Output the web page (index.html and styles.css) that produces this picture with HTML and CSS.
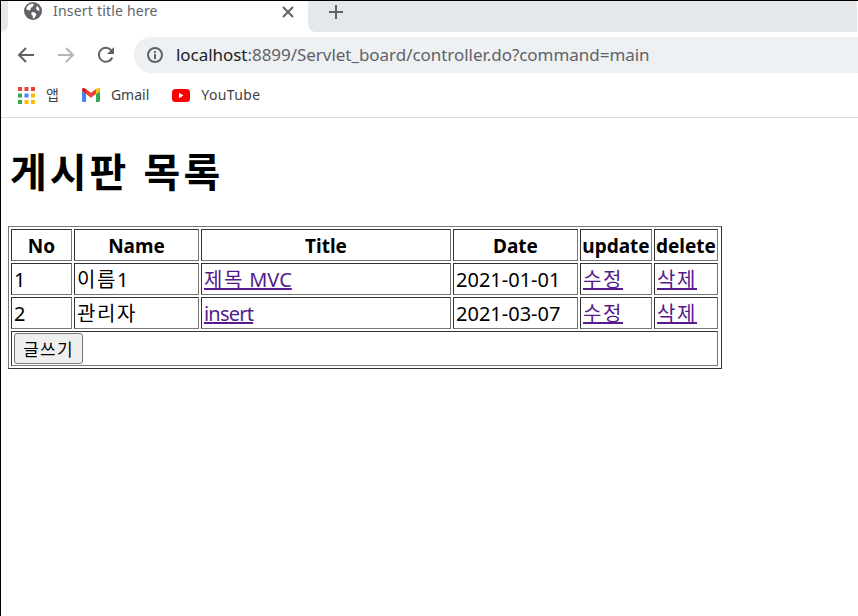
FILE: index.html
```html
<!DOCTYPE html>
<html lang="ko">
<head>
<meta charset="utf-8">
<title>Insert title here</title>
<link rel="stylesheet" href="styles.css">
</head>
<body>
<div class="window">
  <div class="tabstrip">
    <div class="tab-edge"></div>
    <div class="tab">
      <svg class="globe" width="18" height="18" viewBox="0 0 18 18"><circle cx="9" cy="9" r="9" fill="#5f6368"/><path d="M4 3.500c2-1.500 4-2 6-1.500L8.500 5 6.500 6 7 7.500 5 8.500 2 7c.3-1.300 1-2.500 2-3.500zM8 10l3 .5 1.500 2-2 3.500-1.500.5-.5-3-1.500-1.500zM13 3.500l2 2.500.5 3-2-.5-1.500-2z" fill="#fff"/></svg>
      <span class="tab-title">Insert title here</span>
      <svg class="tab-close" width="12" height="12" viewBox="0 0 12 12"><path d="M1 1l10 10M11 1L1 11" stroke="#5f6368" stroke-width="2"/></svg>
    </div>
    <div class="tab-rest">
      <svg width="16" height="16" viewBox="0 0 16 16"><path d="M8 1v14M1 8h14" stroke="#5f6368" stroke-width="2"/></svg>
    </div>
  </div>
  <div class="toolbar">
    <svg class="nav-icon" width="18" height="18" viewBox="0 0 18 18"><path d="M17 9H2M9 2L2 9l7 7" fill="none" stroke="#5f6368" stroke-width="2"/></svg>
    <svg class="nav-icon" width="18" height="18" viewBox="0 0 18 18"><path d="M1 9h15M9 2l7 7-7 7" fill="none" stroke="#b4b7ba" stroke-width="2"/></svg>
    <svg class="nav-icon" width="18" height="18" viewBox="0 0 18 18"><path d="M15.300 11.500A7 7 0 1 1 14 4l1.500 1.500" fill="none" stroke="#5f6368" stroke-width="2"/><path d="M17 1v7h-7z" fill="#5f6368"/></svg>
    <div class="omnibox">
      <svg class="info" width="16" height="16" viewBox="0 0 16 16"><circle cx="8" cy="8" r="7" fill="none" stroke="#5f6368" stroke-width="2"/><path d="M8 7v5M8 4v2" stroke="#5f6368" stroke-width="2"/></svg>
      <span class="url"><span class="host">localhost</span>:8899/Servlet_board/controller.do?command=main</span>
    </div>
  </div>
  <div class="bookmarks">
    <span class="bookmark">
      <svg class="bm-apps" width="17" height="17" viewBox="0 0 17 17">
        <rect width="4" height="4" fill="#ea4335"/><rect x="6.500" width="4" height="4" fill="#ea4335"/><rect x="13" width="4" height="4" fill="#ea4335"/>
        <rect y="6.500" width="4" height="4" fill="#34a853"/><rect x="6.500" y="6.500" width="4" height="4" fill="#4285f4"/><rect x="13" y="6.500" width="4" height="4" fill="#fbbc05"/>
        <rect y="13" width="4" height="4" fill="#34a853"/><rect x="6.500" y="13" width="4" height="4" fill="#fbbc05"/><rect x="13" y="13" width="4" height="4" fill="#fbbc05"/>
      </svg>
      <span class="bm-label">앱</span>
    </span>
    <span class="bookmark">
      <svg width="18" height="14" viewBox="0 0 18 14"><path d="M0 3v9.500C0 13.300.7 14 1.500 14H4V6z" fill="#4285f4"/><path d="M18 3v9.500c0 .8-.7 1.500-1.500 1.500H14V6z" fill="#34a853"/><path d="M14 1v5l4-3V1.500C18 0 16.500-.4 15.500.3z" fill="#fbbc05"/><path d="M4 6V1l5 3.800L14 1v5L9 9.800z" fill="#ea4335"/><path d="M0 3V1.500C0 0 1.500-.4 2.500.3L4 1v5z" fill="#c5221f"/></svg>
      <span class="bm-label">Gmail</span>
    </span>
    <span class="bookmark">
      <svg width="18" height="13" viewBox="0 0 18 13"><rect width="18" height="13" rx="3.500" fill="#f00"/><path d="M7 3.800v5.400L11.500 6.500z" fill="#fff"/></svg>
      <span class="bm-label bm-wide">YouTube</span>
    </span>
  </div>
  <main class="page">
    <h1 class="heading">게시판 목록</h1>
    <table class="board">
      <colgroup>
        <col class="c-no"><col class="c-name"><col class="c-title"><col class="c-date"><col class="c-update"><col class="c-delete">
      </colgroup>
      <tr><th>No</th><th>Name</th><th>Title</th><th>Date</th><th>update</th><th>delete</th></tr>
      <tr><td>1</td><td><span class="ko">이름</span>1</td><td><a href="#a"><span class="ko">제목</span> MVC</a></td><td>2021-01-01</td><td><a href="#a"><span class="ko">수정</span></a></td><td><a href="#a"><span class="ko">삭제</span></a></td></tr>
      <tr><td>2</td><td><span class="ko">관리자</span></td><td><a href="#a" class="tight">insert</a></td><td>2021-03-07</td><td><a href="#a"><span class="ko">수정</span></a></td><td><a href="#a"><span class="ko">삭제</span></a></td></tr>
      <tr><td colspan="6" class="action"><button class="write" type="button">글쓰기</button></td></tr>
    </table>
  </main>
</div>
</body>
</html>
```
FILE: styles.css
```css
* { box-sizing: border-box; }
html, body { margin: 0; padding: 0; background: #fff; }
body { font-family: "Noto Sans", "Noto Sans CJK KR", sans-serif; }
a:link, a { color: #551a8b; }

.window {
  width: 858px;
  height: 616px;
  border-left: 1px solid #000;
  border-top: 1px solid #000;
  overflow: hidden;
  background: #fff;
}

.tabstrip { display: flex; height: 31px; padding-right: 1px; background: #fff; }
.tab-edge { width: 7px; background: #e4e8eb; border-bottom-right-radius: 8px; }
.tab {
  width: 300px;
  display: flex;
  align-items: center;
  padding: 0 14px 0 16px;
  background: #fff;
}
.globe { margin-top: -11px; flex: none; }
.tab-title { margin-left: 11px; font-size: 14px; line-height: 20px; letter-spacing: 0.2px; margin-top: -11px; color: #5f6368; flex: 1; }
.tab-close { flex: none; margin-top: -10px; }
.tab-rest {
  flex: 1;
  display: flex;
  align-items: center;
  padding-left: 20px;
  padding-bottom: 10px;
  background: #e4e8eb;
  border-bottom-left-radius: 8px;
}

.toolbar { display: flex; align-items: center; height: 41px; padding: 5px 0 0 16px; }
.nav-icon { flex: none; margin-right: 22px; }
.omnibox {
  flex: 1;
  display: flex;
  align-items: center;
  height: 36px;
  margin-left: -3px;
  padding-left: 13px;
  background-color: #edf0f3;
  background-image: conic-gradient(#f2f4f6 25%, #e8ecef 25% 50%, #f2f4f6 50% 75%, #e8ecef 75%);
  background-size: 2px 2px;
  border-radius: 18px 0 0 18px;
}
.info { flex: none; }
.url { margin-left: 13px; font-size: 17px; line-height: 24px; letter-spacing: -0.04px; color: #5f6368; white-space: nowrap; }
.host { color: #202124; }

.bookmarks {
  display: flex;
  align-items: center;
  gap: 23px;
  height: 45px;
  padding-left: 17px;
  border-bottom: 1px solid #dadce0;
}
.bookmark { display: flex; align-items: center; gap: 11px; }
.bm-label { font-size: 14px; line-height: 20px; color: #3c4043; }
.bm-wide { letter-spacing: 0.4px; }

.page { padding: 0 0 0 7px; }
.heading {
  margin: 23px 0 27px 2px;
  font-size: 40px;
  line-height: 58px;
  letter-spacing: 3px;
  font-weight: 700;
  color: #000;
  font-family: "Noto Sans CJK KR", sans-serif;
}

.board {
  width: 714px;
  table-layout: fixed;
  padding-right: 1px;
  border: 1px solid;
  border-color: #777 #333 #333 #777;
  border-collapse: separate;
  border-spacing: 2px;
  font-size: 20px;
  color: #000;
}
.board th, .board td {
  border: 1px solid;
  border-color: #333 #777 #777 #333;
  padding: 2px 2px 0;
  line-height: 28px;
  height: 32px;
}
.board th { text-align: center; font-weight: 700; font-size: 19px; padding: 2px 1px 0; }
.board td { text-align: left; }
.ko { letter-spacing: 1.6px; }
.tight { letter-spacing: -0.8px; }
.c-no { width: 61px; }
.c-name { width: 125px; }
.c-title { width: 250px; }
.c-date { width: 125px; }
.c-update { width: 72px; }
.c-delete { width: 64px; }
.board td.action { height: 35px; padding: 1px 1px 1px 2px; }
.write {
  display: block;
  width: 69px;
  height: 31px;
  padding: 0;
  font: 17px/24px "Noto Sans CJK KR", sans-serif;
  letter-spacing: 1.2px;
  color: #000;
  background: #efefef;
  border: 1px solid #767676;
  border-radius: 3px;
}
```
